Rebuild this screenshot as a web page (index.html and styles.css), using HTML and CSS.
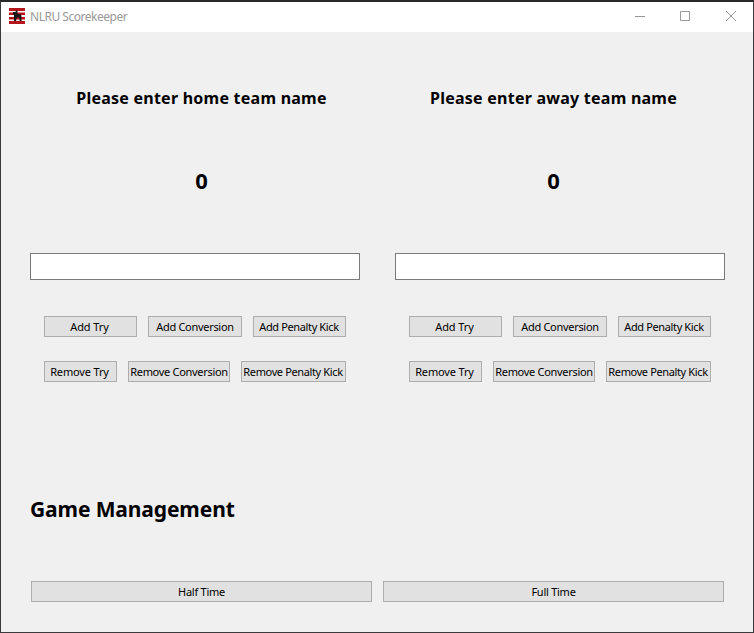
FILE: index.html
```html
<!DOCTYPE html>
<html lang="en">
<head>
<meta charset="utf-8">
<title>NLRU Scorekeeper</title>
<link rel="stylesheet" href="styles.css">
</head>
<body>
<div class="window">
  <header class="titlebar">
    <svg class="logo" width="16" height="16" viewBox="0 0 16 16">
      <path fill="#fff" d="M0 0h16v16H0z"/>
      <path fill="#b5161b" d="M0 0h16v3H0zM0 4.500h16v2.500H0zM0 9h16v2.500H0zM0 13h16v3H0z"/>
      <path fill="#181818" d="M4 4h2.500L7 2.500h1.500V6H11L12.500 7.500V13H10.500V9.500H8L7 13H5V6.500H4z"/>
    </svg>
    <span class="title">NLRU Scorekeeper</span>
    <svg class="controls" width="104" height="12" viewBox="0 0 104 12" fill="none" stroke="#999">
      <path d="M0 6.500h10M45.500 1.500h9v9h-9z"/>
      <path d="M91 1l10 10M101 1 91 11"/>
    </svg>
  </header>
  <main class="content">
    <div class="pair names"><h2>Please enter home team name</h2><h2>Please enter away team name</h2></div>
    <div class="pair scores"><strong>0</strong><strong>0</strong></div>
    <div class="teams">
      <section class="team">
        <input type="text" aria-label="Home team name">
        <div class="actions add"><button>Add Try</button><button>Add Conversion</button><button>Add Penalty Kick</button></div>
        <div class="actions remove"><button>Remove Try</button><button>Remove Conversion</button><button>Remove Penalty Kick</button></div>
      </section>
      <section class="team">
        <input type="text" aria-label="Away team name">
        <div class="actions add"><button>Add Try</button><button>Add Conversion</button><button>Add Penalty Kick</button></div>
        <div class="actions remove"><button>Remove Try</button><button>Remove Conversion</button><button>Remove Penalty Kick</button></div>
      </section>
    </div>
    <h1>Game Management</h1>
    <div class="pair management"><button>Half Time</button><button>Full Time</button></div>
  </main>
</div>
</body>
</html>
```
FILE: styles.css
```css
* { box-sizing: border-box; }
body { margin: 0; font-family: "Noto Sans", sans-serif; color: #000; overflow: hidden; }
.window {
  width: 754px; height: 633px; display: flex; flex-direction: column;
  background: #f0f0f0; border: 1px solid #3a3a3c; border-top: 2px solid #29282b;
}
.titlebar { height: 30px; flex: none; background: #fff; display: flex; align-items: center; padding: 0 14px 2px 8px; }
.logo { margin-right: 5px; }
.title { font-size: 12px; line-height: 16px; letter-spacing: -0.48px; color: #999; padding-top: 2px; }
.controls { margin-left: auto; }
.content { padding: 56px 29px 0; }
.pair { display: grid; grid-template-columns: 341px 341px; gap: 11px; margin-left: 1px; }
h1, h2 { margin: 0; font-weight: 700; white-space: nowrap; }
h2 { font-size: 16px; line-height: 20px; letter-spacing: 0.24px; text-align: center; }
.scores { margin-top: 59px; height: 28px; text-align: center; }
.scores strong { font-size: 22px; line-height: 26px; }
.teams { display: flex; gap: 35px; margin-top: 58px; }
.team { width: 330px; }
input { display: block; width: 330px; height: 27px; border: 1px solid #7a7a7a; background: #fff; padding: 0 4px; }
.actions { display: grid; column-gap: 11px; margin-left: 14px; }
.add { grid-template-columns: 93px 94px 93px; margin-top: 36px; }
.remove { grid-template-columns: 73px 102px 105px; margin-top: 24px; }
button {
  height: 21px; padding: 0 2px 0 0; border: 1px solid #adadad; background: #e1e1e1; color: #000;
  font: 11px/19px "Noto Sans", sans-serif; letter-spacing: -0.25px; white-space: nowrap;
}
.actions button:nth-child(2) { letter-spacing: -0.3px; padding-right: 0; }
.actions button:nth-child(3) { letter-spacing: -0.37px; padding-right: 1px; }
.remove button:first-child { letter-spacing: -0.15px; }
.actions.add button:first-child { letter-spacing: -0.1px; }
.management button { padding-right: 0; }
h1 { margin-top: 113px; font-size: 21px; line-height: 28px; letter-spacing: -0.12px; }
h1 + .pair { margin-top: 58px; }
```
